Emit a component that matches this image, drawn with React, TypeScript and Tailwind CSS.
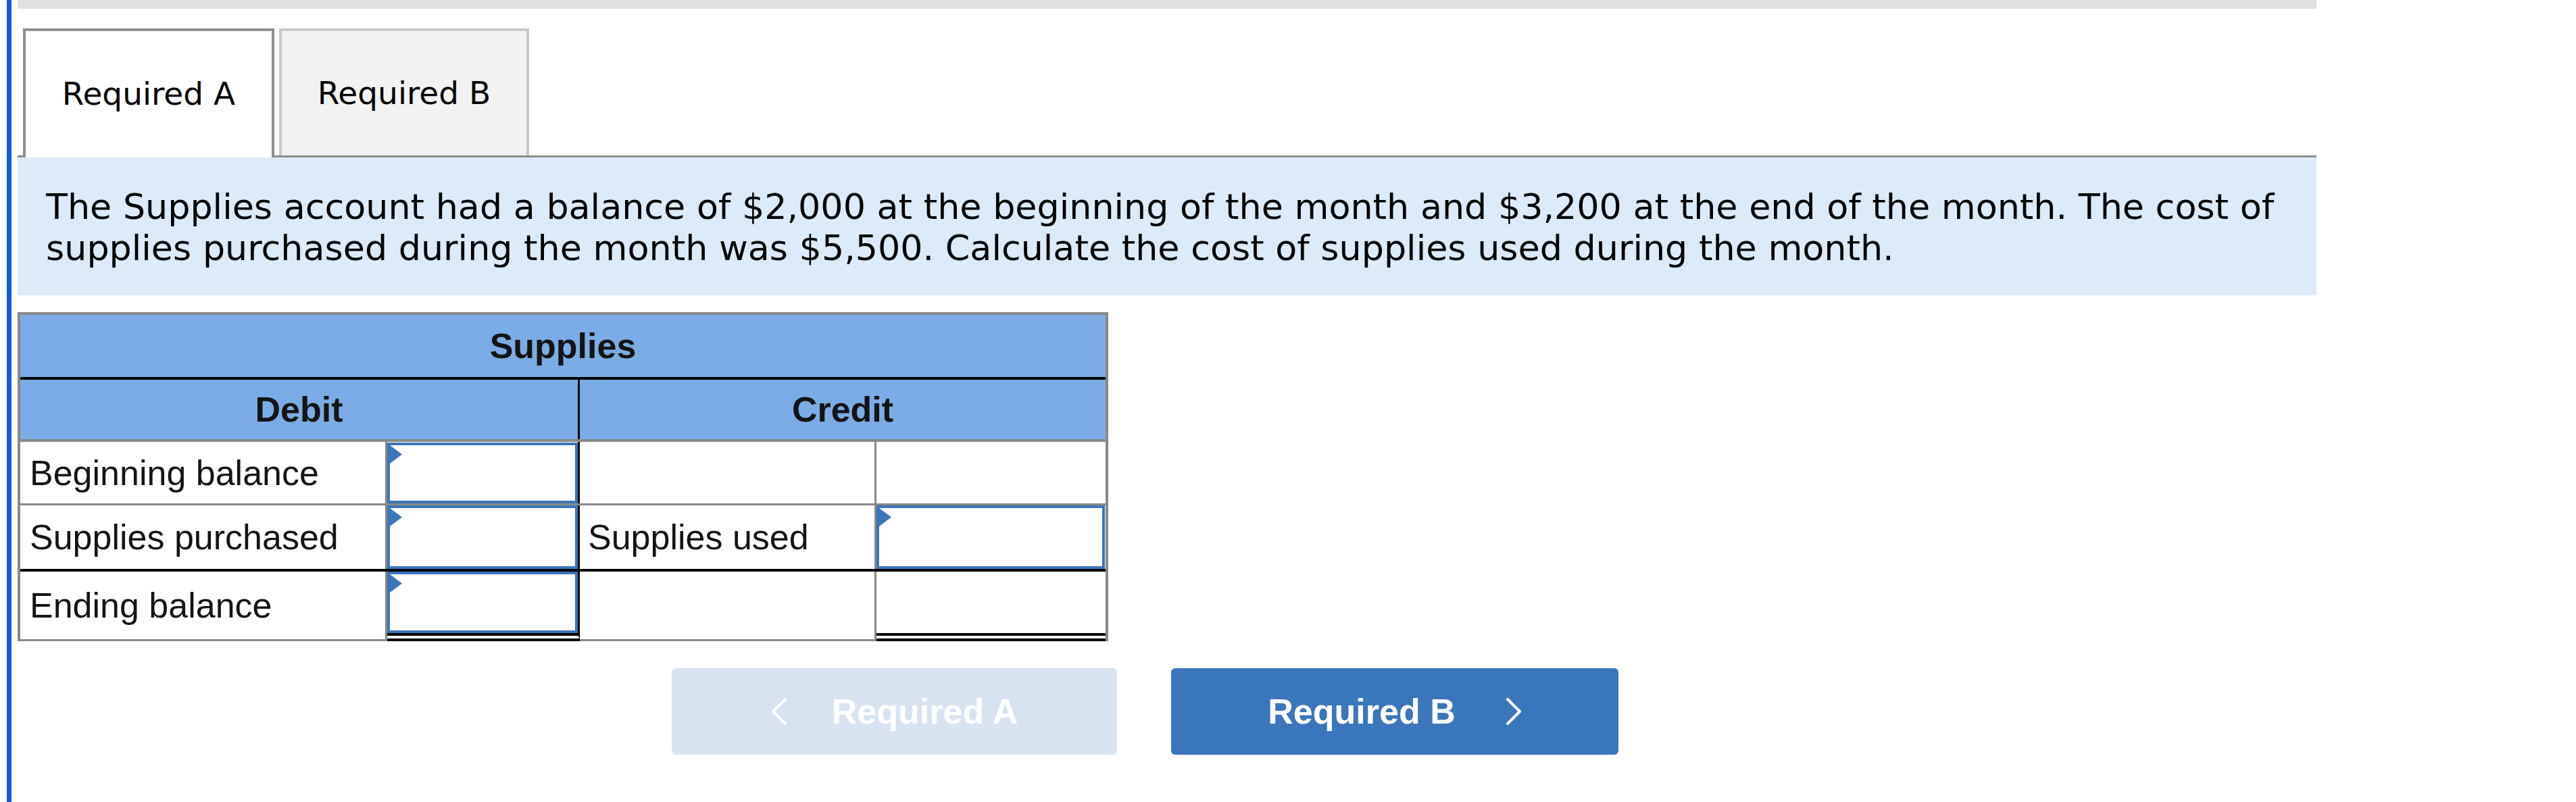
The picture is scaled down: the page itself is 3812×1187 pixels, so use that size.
import React from 'react';

const Flag: React.FC = () => (
    <svg className="absolute left-0 top-0" width="18" height="27" viewBox="0 0 18 27">
        <path d="M0 0 L18 13.5 L0 27 Z" fill="#3a76bb" />
    </svg>
);

const InputBox: React.FC = () => (
    <div className="relative h-full w-full border-[4px] border-[#3a76bb] bg-white">
        <Flag />
    </div>
);

const Chevron: React.FC<{ dir: 'left' | 'right' }> = ({ dir }) => (
    <svg width="24" height="40" viewBox="0 0 24 40" className="shrink-0">
        <polyline
            points={dir === 'left' ? '21,2 3,20 21,38' : '3,2 21,20 3,38'}
            fill="none"
            stroke="#ffffff"
            strokeWidth="4"
            strokeLinecap="round"
            strokeLinejoin="round"
        />
    </svg>
);

const App: React.FC = () => {
    return (
        <div className="h-[1187px] w-[3812px] bg-white">
            <div className="ml-[10px] flex h-full border-l-[7px] border-[#0d5fd3] pl-[9px]">
                <div className="w-[3402px]">
                    {/* top bar */}
                    <div className="h-[13px] bg-[#e0e0e0]"></div>

                    {/* tabs */}
                    <div className="mt-[29px] flex items-end border-b-[3px] border-[#8c8c8c] font-['DejaVu_Sans',sans-serif] text-[47px] text-black">
                        <div className="relative z-10 -mb-[3px] ml-[8px] flex h-[191px] w-[372px] items-center justify-center border-x-[4px] border-t-[4px] border-[#8f8f8f] bg-white">
                            Required A
                        </div>
                        <div className="ml-[7px] flex h-[188px] w-[370px] items-center justify-center border-x-[4px] border-t-[4px] border-[#c8c8c8] bg-[#f2f2f2]">
                            Required B
                        </div>
                    </div>

                    {/* question */}
                    <div className="h-[204px] bg-[#dcebf9] pl-[42px] pr-[40px] pt-[42px] font-['DejaVu_Sans',sans-serif] text-[52.3px] leading-[61px] text-black">
                        The Supplies account had a balance of $2,000 at the beginning of the month and $3,200 at the end of the month. The cost of supplies purchased during the month was $5,500. Calculate the cost of supplies used during the month.
                    </div>

                    {/* T-account */}
                    <div className="mt-[25px] w-[1614px] border-x-[4px] border-t-[4px] border-[#888888] font-['Liberation_Sans',Arial,sans-serif] text-[52px] text-[#141414]">
                        <div className="flex h-[96px] items-center justify-center border-b-[4px] border-black bg-[#7aade5] font-bold">
                            Supplies
                        </div>
                        <div className="flex h-[92px] border-b-[4px] border-[#888888] bg-[#7aade5] font-bold">
                            <div className="flex w-[828px] items-center justify-center border-r-[3px] border-black">Debit</div>
                            <div className="flex flex-1 items-center justify-center">Credit</div>
                        </div>

                        <div className="flex h-[94px] border-b-[3px] border-[#888888]">
                            <div className="flex w-[543px] items-center border-r-[3px] border-[#888888] pl-[14px]">Beginning balance</div>
                            <div className="w-[285px] border-r-[3px] border-black pt-px"><InputBox /></div>
                            <div className="w-[439px] border-r-[3px] border-[#888888]"></div>
                            <div className="flex-1"></div>
                        </div>

                        <div className="flex h-[98px] border-b-[4px] border-black">
                            <div className="flex w-[543px] items-center border-r-[3px] border-[#888888] pl-[14px]">Supplies purchased</div>
                            <div className="w-[285px] border-r-[3px] border-black"><InputBox /></div>
                            <div className="flex w-[439px] items-center border-r-[3px] border-[#888888] pl-[12px]">Supplies used</div>
                            <div className="flex-1 pr-[1px]"><InputBox /></div>
                        </div>

                        <div className="flex h-[103px]">
                            <div className="flex w-[543px] items-center border-b-[3px] border-r-[3px] border-[#888888] pl-[14px]">Ending balance</div>
                            <div className="w-[285px] border-b-[12px] border-r-[3px] border-b-black border-r-black [border-bottom-style:double]"><InputBox /></div>
                            <div className="w-[439px] border-b-[3px] border-r-[3px] border-[#888888]"></div>
                            <div className="flex-1 border-b-[12px] border-black [border-bottom-style:double]"></div>
                        </div>
                    </div>

                    {/* navigation */}
                    <div className="ml-[968px] mt-[40px] flex gap-[80px] font-['Liberation_Sans',Arial,sans-serif] text-[52px] font-bold text-white">
                        <button className="flex h-[128px] w-[659px] items-center justify-center gap-[66px] rounded-[6px] bg-[#d7e3f1]">
                            <Chevron dir="left" />
                            <span>Required A</span>
                        </button>
                        <button className="flex h-[128px] w-[662px] items-center justify-center gap-[74px] rounded-[6px] bg-[#3a76bb]">
                            <span>Required B</span>
                            <Chevron dir="right" />
                        </button>
                    </div>
                </div>
            </div>
        </div>
    );
};

export default App;
